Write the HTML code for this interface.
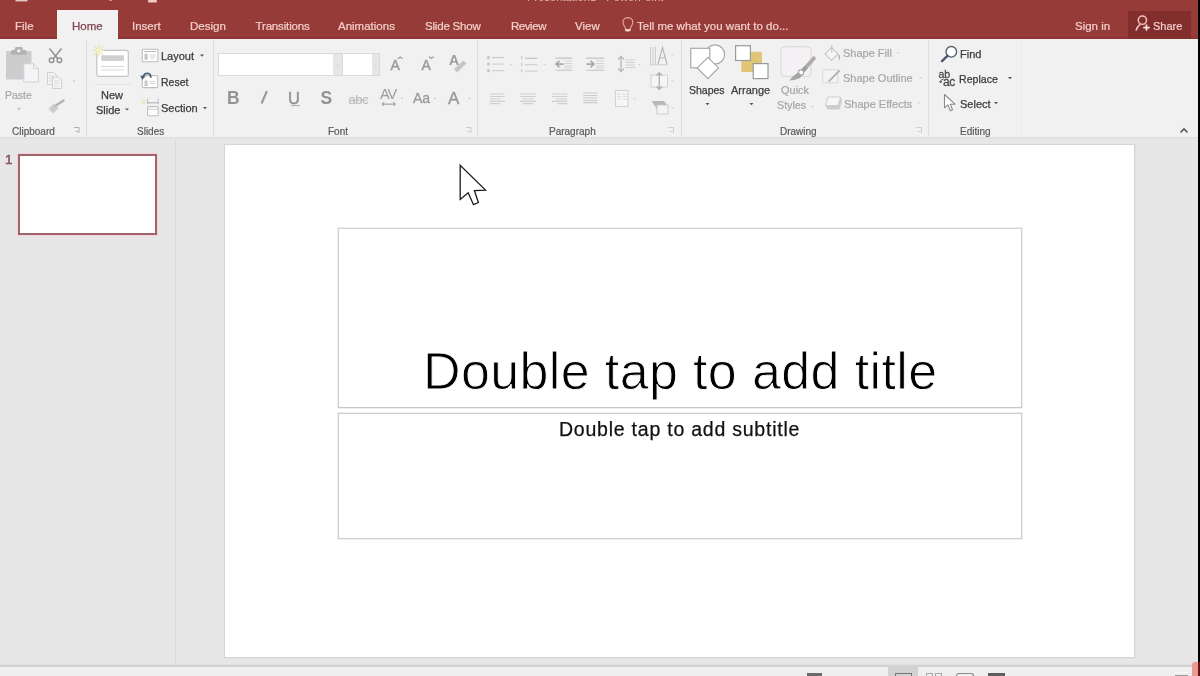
<!DOCTYPE html>
<html><head><meta charset="utf-8">
<style>
*{box-sizing:border-box;margin:0;padding:0}
html,body{width:1200px;height:676px;overflow:hidden;background:#E7E7E7;font-family:"Liberation Sans",sans-serif}
.a{position:absolute;white-space:nowrap}
#bar{position:absolute;left:0;top:0;width:1200px;height:39px;background:#963B38}
.tab{position:absolute;top:18.5px;font-size:11.5px;color:#F4D0CB;line-height:14px;-webkit-text-stroke:0.2px #F4D0CB}
#ribbon{position:absolute;left:0;top:39px;width:1198px;height:98px;background:#F1F1F1}
.lbl{position:absolute;font-size:10px;color:#5A5A5A;line-height:12px;margin-top:1px;-webkit-text-stroke:0.2px #5A5A5A}
.t{position:absolute;font-size:11px;color:#3C3C3C;line-height:13px;margin-top:1px;-webkit-text-stroke:0.25px #3C3C3C}
.t.dis{-webkit-text-stroke:0.2px #A6A6A6}
.dis{color:#A6A6A6}
.sep{position:absolute;top:40px;width:1px;height:97px;background:#DDDDDD}
svg{position:absolute;overflow:visible}
#root{position:absolute;left:0;top:0;width:1200px;height:676px;will-change:transform}
</style></head><body><div id="root">
<div id="bar"></div>
<!-- title bar cut-off text -->
<div class="a" style="left:527px;top:-9px;font-size:11px;color:#E2B5B0;letter-spacing:0.1px;line-height:13px">Presentation1 - PowerPoint</div>
<!-- tabs -->
<div class="a" style="left:0;top:37px;width:1198px;height:2px;background:#8F3335"></div>
<div id="hometab" class="a" style="left:57px;top:10px;width:61px;height:30px;background:#F1F1F1"></div>
<div class="tab" style="left:15px">File</div>
<div class="tab" style="left:72px;color:#7F4450;-webkit-text-stroke:0.25px #7F4450">Home</div>
<div class="tab" style="left:132px">Insert</div>
<div class="tab" style="left:190px">Design</div>
<div class="tab" style="left:255.5px;letter-spacing:-0.15px">Transitions</div>
<div class="tab" style="left:338px">Animations</div>
<div class="tab" style="left:425px;letter-spacing:-0.2px">Slide Show</div>
<div class="tab" style="left:511px;letter-spacing:-0.45px">Review</div>
<div class="tab" style="left:575px">View</div>
<div class="tab" style="left:637px">Tell me what you want to do...</div>
<div class="tab" style="left:1075px">Sign in</div>
<div class="a" style="left:1128px;top:11px;width:63px;height:28px;background:#812E2D"></div>
<div class="tab" style="left:1153px;font-size:11px">Share</div>
<div class="a" style="left:1198px;top:0;width:2px;height:662px;background:#000"></div>


<svg width="1200" height="40" style="left:0;top:0" viewBox="0 0 1200 40">
 <path d="M625.6 27 Q625.6 24.5 624.3 22.8 Q623 21 623 18.9 Q623.2 14.6 627.9 14.4 Q632.6 14.6 632.8 18.9 Q632.8 21 631.5 22.8 Q630.2 24.5 630.2 27 Z" fill="none" stroke="#E8A09A" stroke-width="1.2" transform="translate(0,3.2)"/>
 <rect x="625.2" y="29" width="5" height="2.4" rx="0.8" fill="#F6D2CB"/>
 <circle cx="1142.4" cy="20.2" r="4.1" fill="none" stroke="#F2C4C0" stroke-width="1.5"/>
 <path d="M1140.2 24.3 Q1137 26.5 1136 30.6" fill="none" stroke="#F2C4C0" stroke-width="1.5"/>
 <path d="M1146.5 24.4 V30.8 M1143.3 27.6 H1149.7" stroke="#FBE8E6" stroke-width="1.6"/>
 <rect x="15.5" y="0" width="12" height="1.4" fill="#E9C9C6"/>
 <rect x="148" y="0" width="9" height="2.4" rx="1" fill="#F2C9BF"/>
 <rect x="109" y="0" width="3" height="1" fill="#C98F8A"/>
</svg>

<div id="ribbon"></div>
<div class="a" style="left:0;top:137px;width:1198px;height:2px;background:#E1E1E1"></div>

<!-- group separators -->
<div class="sep" style="left:86px"></div>
<div class="sep" style="left:213px"></div>
<div class="sep" style="left:477px"></div>
<div class="sep" style="left:681px"></div>
<div class="sep" style="left:928px"></div>

<!-- group labels -->
<div class="lbl" style="left:12px;top:125px">Clipboard</div>
<div class="lbl" style="left:137px;top:125px">Slides</div>
<div class="lbl" style="left:328px;top:125px">Font</div>
<div class="lbl" style="left:549px;top:125px">Paragraph</div>
<div class="lbl" style="left:780px;top:125px">Drawing</div>
<div class="lbl" style="left:960px;top:125px">Editing</div>


<!-- ribbon text -->
<div class="t dis" style="left:5px;top:88px;font-size:10.5px">Paste</div>
<div class="a" style="left:94px;top:84px;width:37px;height:1px;background:#E4E4E4"></div>
<div class="t" style="left:101px;top:88px">New</div>
<div class="t" style="left:96px;top:103px">Slide</div>
<div class="t" style="left:161px;top:49px">Layout</div>
<div class="t" style="left:161px;top:75px;font-size:10.5px">Reset</div>
<div class="t" style="left:161px;top:101px">Section</div>
<div class="t" style="left:689px;top:83px;font-size:10.5px">Shapes</div>
<div class="t" style="left:731px;top:83px">Arrange</div>
<div class="t dis" style="left:781px;top:83px">Quick</div>
<div class="t dis" style="left:777px;top:98px;font-size:10.7px">Styles</div>
<div class="t dis" style="left:843px;top:46px">Shape Fill</div>
<div class="t dis" style="left:843px;top:71px">Shape Outline</div>
<div class="t dis" style="left:844px;top:97px">Shape Effects</div>
<div class="t" style="left:960px;top:47px">Find</div>
<div class="t" style="left:959px;top:72px;font-size:10.6px">Replace</div>
<div class="t" style="left:960px;top:97px">Select</div>
<!-- font boxes -->
<div class="a" style="left:218px;top:53px;width:125px;height:23px;background:#fff;border:1px solid #DADADA"></div>
<div class="a" style="left:333px;top:54px;width:9px;height:21px;background:#E6E6E6"></div>
<div class="a" style="left:342px;top:53px;width:38px;height:23px;background:#fff;border:1px solid #DADADA"></div>
<div class="a" style="left:372px;top:54px;width:7px;height:21px;background:#E6E6E6"></div>
<!-- B I U S -->
<div class="a" style="left:227px;top:88px;font-size:17.5px;font-weight:bold;color:#939393;line-height:20px">B</div>

<div class="a" style="left:288px;top:87.5px;font-size:16.5px;color:#939393;line-height:20px;-webkit-text-stroke:0.5px #939393">U</div>
<div class="a" style="left:320.5px;top:88px;font-size:17.5px;font-weight:bold;color:#939393;line-height:20px">S</div>
<div class="a" style="left:348.5px;top:91.5px;font-size:13px;color:#B8B8B8;line-height:16px;letter-spacing:-0.5px">abc</div>
<div class="a" style="left:380px;top:86px;font-size:14.5px;color:#9C9C9C;line-height:16px;letter-spacing:-1.2px">AV</div>
<div class="a" style="left:413px;top:90px;font-size:14px;color:#9A9A9A;line-height:16px;-webkit-text-stroke:0.3px #9A9A9A">Aa</div>
<div class="a" style="left:448px;top:88.5px;font-size:17px;color:#9A9A9A;line-height:20px;-webkit-text-stroke:0.4px #9A9A9A">A</div>
<div class="a" style="left:390.5px;top:57px;font-size:14px;color:#9A9A9A;line-height:16px;-webkit-text-stroke:0.4px #9A9A9A">A</div>
<div class="a" style="left:421.5px;top:57px;font-size:14px;color:#9A9A9A;line-height:16px;-webkit-text-stroke:0.4px #9A9A9A">A</div>
<div class="a" style="left:449px;top:52px;font-size:14px;color:#9C9C9C;line-height:16px;font-weight:bold">A</div>
<!-- editing ab/ac -->
<div class="a" style="left:938.5px;top:68.5px;font-size:10.5px;color:#4A4A4A;line-height:11px;-webkit-text-stroke:0.3px #4A4A4A">ab</div>
<div class="a" style="left:943px;top:75.5px;font-size:12px;color:#4A4A4A;line-height:13px;-webkit-text-stroke:0.3px #4A4A4A;letter-spacing:-0.3px">ac</div>
<div class="sep" style="left:1021px;background:#ECECEC"></div>


<!-- icons overlay -->
<svg width="1200" height="676" style="left:0;top:0" viewBox="0 0 1200 676">
<g id="clip">
 <rect x="6" y="51" width="25.5" height="28.5" fill="#CDCDCD"/>
 <path d="M11 54.8 V51.5 Q11 50 12.5 50 H14.8 V48.5 Q14.8 47 16.3 47 H21.3 Q22.8 47 22.8 48.5 V50 H25.1 Q26.6 50 26.6 51.5 V54.8 Z" fill="#B2B2B2"/>
 <circle cx="18.8" cy="50.8" r="1.6" fill="#F4F4F4"/>
 <path d="M23.8 63.8 H33.5 L38.4 68.7 V82 H23.8 Z" fill="#F6F4F8" stroke="#D2D2D2" stroke-width="1"/>
 <path d="M33.5 63.8 V68.7 H38.4" fill="none" stroke="#D2D2D2" stroke-width="1"/>
 <path d="M17 108 h4 l-2 2 z" fill="#B8B8B8"/>
 <!-- scissors -->
 <path d="M49.5 48.5 L57.5 58.5 M61.5 48.5 L53.5 58.5" stroke="#8C8C8C" stroke-width="1.3" fill="none"/>
 <circle cx="51.6" cy="60.2" r="2.3" fill="none" stroke="#8C8C8C" stroke-width="1.3"/>
 <circle cx="59.4" cy="60.2" r="2.3" fill="none" stroke="#8C8C8C" stroke-width="1.3"/>
 <!-- copy -->
 <path d="M47.5 72.5 h6 l3 3 v9 h-9 z" fill="#F4F4F4" stroke="#CFCFCF" stroke-width="1"/>
 <path d="M52.5 77 h6 l3 3 v8.5 h-9 z" fill="#F4F4F4" stroke="#CFCFCF" stroke-width="1"/>
 <path d="M49 76h5M49 78.5h5M49 81h3M54 81h5M54 83.5h5M54 86h5" stroke="#D6D6D6" stroke-width="0.8"/>
 <path d="M72.5 80.5 h3 l-1.5 1.5 z" fill="#C4C4C4"/>
 <!-- format painter -->
 <path d="M48.5 109 L54 103.5 L58.5 108 L53 113.5 Z" fill="#CFCFCF"/>
 <path d="M50.5 107 L55 111.5 M52.5 105 L57 109.5" stroke="#BEBEBE" stroke-width="0.8"/>
 <path d="M56 105.5 L63.5 100.5" stroke="#B4B4B4" stroke-width="2.6" stroke-linecap="round"/>
</g>
<g id="slides">
 <rect x="96.8" y="50.3" width="31.5" height="26" rx="1.8" fill="#fff" stroke="#C4C4C4" stroke-width="1.2"/>
 <rect x="101.2" y="55.3" width="22.8" height="5.6" fill="#D0D0D0"/>
 <path d="M101.2 66.4 H124 M101.2 70 H124" stroke="#D6D6D6" stroke-width="1"/>
 <g stroke="#E3E2A8" stroke-width="1.2">
  <path d="M98.9 44.5 V56.5 M92.9 50.5 H104.9 M94.7 46.3 L103.1 54.7 M103.1 46.3 L94.7 54.7"/>
 </g>
 <circle cx="98.9" cy="50.5" r="2.6" fill="#F2F2C8"/>
 <path d="M125 108.4 h4 l-2 2.2 z" fill="#555"/>
 <!-- layout -->
 <rect x="142.3" y="49.2" width="15.6" height="12.6" rx="1" fill="#fff" stroke="#BDBDBD" stroke-width="1.1"/>
 <path d="M144.3 51.6 H156" stroke="#B5B5B5" stroke-width="1"/>
 <rect x="144.5" y="53.8" width="3.2" height="6" fill="#C6C6C6"/>
 <path d="M149.5 55 H155.5 M149.5 57 H155.5 M151 59 H154" stroke="#CACACA" stroke-width="0.8"/>
 <path d="M200 54.5 h4 l-2 2.2 z" fill="#555"/>
 <!-- reset -->
 <rect x="142.3" y="75.6" width="15.4" height="12" rx="1" fill="#fff" stroke="#C0C0C0" stroke-width="1.1"/>
 <rect x="144.5" y="80.5" width="3.2" height="5.5" fill="#CACACA"/>
 <path d="M149.5 81.5 H155.5 M149.5 83.5 H155.5" stroke="#CACACA" stroke-width="0.8"/>
 <path d="M142.8 77.6 Q144 73.2 147.5 73.4 Q151 73.8 150.8 77.8" fill="none" stroke="#4A6076" stroke-width="1.7"/>
 <path d="M140.2 75.6 L142.2 79.8 L145.6 76.6 Z" fill="#4A6076"/>
 <!-- section -->
 <path d="M147.6 98.6 V104.2 M158.2 98.6 V104.2" stroke="#C4C4C4" stroke-width="1.1"/>
 <path d="M147 102.8 H158.8" stroke="#B8B8B8" stroke-width="1.2"/>
 <rect x="147.6" y="106.6" width="10.6" height="9.2" rx="0.8" fill="#fff" stroke="#BFBFBF" stroke-width="1.1"/>
 <path d="M147.6 109.2 H158.2" stroke="#C4C4C4" stroke-width="0.9"/>
 <rect x="141.5" y="99.5" width="4" height="4.5" fill="#EAEACB"/>
 <path d="M203 107 h4 l-2 2.2 z" fill="#555"/>
</g>
<g id="font">
 <path d="M291 105.6 H300" stroke="#AAAAAA" stroke-width="1"/>
 <path d="M261.6 103.5 L266.9 91" stroke="#979797" stroke-width="2"/>
 <path d="M348.5 100.2 H367" stroke="#BDBDBD" stroke-width="1"/>
 <path d="M382 104.1 H395.5 M382 104.1 l2.2 -1.8 M382 104.1 l2.2 1.8 M395.5 104.1 l-2.2 -1.8 M395.5 104.1 l-2.2 1.8" stroke="#A8A8A8" stroke-width="1.2" fill="none"/>
 <circle cx="401.9" cy="98.3" r="0.8" fill="#BBB"/>
 <circle cx="435" cy="98.5" r="0.8" fill="#BBB"/>
 <circle cx="469.4" cy="98.5" r="0.8" fill="#BBB"/>
 <path d="M397.8 58.7 L400.2 56.9 L402.6 58.7" stroke="#A0A0A0" stroke-width="1.2" fill="none"/>
 <path d="M429 56.6 L431.4 58.4 L433.8 56.6" stroke="#A0A0A0" stroke-width="1.2" fill="none"/>
 <path d="M454 69 L463.5 60.5 L466.5 63.5 L457 72.5 Z" fill="#C6C6C6"/>
 <path d="M336.5 64.5 h2 l-1 1 z M374.5 64.5 h2 l-1 1 z" fill="#C8C8C8"/>
 <path d="M466 127.5 h5 v5.5 M467.5 131.5 h2.5" stroke="#C8C8C8" stroke-width="0.9" fill="none"/>
 <path d="M74 127.5 h5 v5.5 M75.5 131.5 h2.5" stroke="#A8A8A8" stroke-width="0.9" fill="none"/>
</g>
<g id="para" stroke-width="1.1" fill="none">
 <g stroke="#C6C6C6">
  <circle cx="488.5" cy="57.6" r="1" fill="#C0C0C0"/><circle cx="488.5" cy="64.1" r="1" fill="#C6C6C6"/><circle cx="488.5" cy="70.6" r="1" fill="#C6C6C6"/>
  <path d="M491.9 57.6 H503.8"/>
 </g>
 <path d="M491.9 64.1 H503.8 M491.9 70.6 H503.8" stroke="#D2D2D2"/>
 <path d="M521.7 56 V59.5 M521.7 62.5 V66 M521.7 69 V72.5" stroke="#C8C8C8"/>
 <path d="M525 58.3 H537.4" stroke="#BEBEBE"/>
 <path d="M525 64.6 H537.4 M525 71.1 H537.4" stroke="#D2D2D2"/>
 <path d="M509.5 64 h3 l-1.5 1.5 z M543 64 h3 l-1.5 1.5 z" fill="#CFCFCF" stroke="none"/>
 <!-- indent -->
 <path d="M555.5 58.1 H572.1 M555.5 70.2 H572.1" stroke="#C4C4C4"/>
 <path d="M564.5 61 H572 M564.5 63.5 H572 M564.5 66 H572 M564.5 68 H572" stroke="#D4D4D4"/>
 <path d="M556 64.1 H563.5 M559.5 60.8 L556 64.1 L559.5 67.4" stroke="#A8A8A8" stroke-width="1.6"/>
 <path d="M586.2 58.1 H604 M586.2 70.2 H604" stroke="#C4C4C4"/>
 <path d="M596 61 H604 M596 63.5 H604 M596 66 H604 M596 68 H604" stroke="#D4D4D4"/>
 <path d="M586.5 64.1 H594 M590.5 60.8 L594 64.1 L590.5 67.4" stroke="#A8A8A8" stroke-width="1.6"/>
 <!-- align -->
 <path d="M490 94 H504.7 M490 96.5 H504.7 M490 99 H501 M490 101.4 H504.7 M490 103.6 H500" stroke="#CFCFCF"/>
 <path d="M520 94 H536 M520 96.5 H536 M522 99 H534 M520 101.4 H536 M523 103.6 H533" stroke="#CFCFCF"/>
 <path d="M552 94 H567.3 M552 96.5 H567.3 M556 99 H567.3 M552 101.4 H567.3 M557 103.6 H567.3" stroke="#CFCFCF"/>
 <path d="M583.3 93 H597.3 M583.3 95.5 H597.3 M583.3 98 H597.3 M583.3 100.5 H597.3 M583.3 102.6 H597.3" stroke="#CBCBCB"/>
 <rect x="615.5" y="90.5" width="12.5" height="16" fill="#F6F6F6" stroke="#D2D2D2"/>
 <path d="M617 94 H621 M617 96.5 H621 M617 99 H621 M622.5 94 H626.5 M622.5 96.5 H626.5 M622.5 99 H626.5" stroke="#D6D6D6" stroke-width="0.8"/>
 <path d="M633 98.3 h3 l-1.5 1.5 z" fill="#CFCFCF" stroke="none"/>
 <!-- line spacing -->
 <path d="M621 57 V71 M618 59.5 L621 56.5 L624 59.5 M618 68.5 L621 71.5 L624 68.5" stroke="#B8B8B8" stroke-width="1.3"/>
 <path d="M625.5 60 H635 M625.5 62.5 H635 M625.5 65 H635 M625.5 67.5 H635" stroke="#D0D0D0"/>
 <path d="M638 64 h3 l-1.5 1.5 z" fill="#CFCFCF" stroke="none"/>
 <!-- text direction -->
 <path d="M650.5 47 V64.5 M653 47 V64.5 M655.5 47 V64.5 M649.5 64.8 H668" stroke="#C8C8C8" stroke-width="0.9"/>
 <path d="M658 64 L662.5 47.5 L667 64 M659.5 58 H665.5" stroke="#B8B8B8" stroke-width="1.2"/>
 <path d="M671 54 h3 l-1.5 1.5 z" fill="#CFCFCF" stroke="none"/>
 <!-- align text -->
 <rect x="651" y="75" width="16.5" height="12" fill="#F6F6F6" stroke="#CFCFCF" stroke-width="0.9"/>
 <path d="M659.3 72.5 V89.5 M656.5 75.5 L659.3 72.7 L662 75.5 M656.5 86.5 L659.3 89.3 L662 86.5" stroke="#B0B0B0" stroke-width="1.3"/>
 <path d="M671 80.5 h3 l-1.5 1.5 z" fill="#CFCFCF" stroke="none"/>
 <!-- smartart -->
 <path d="M651.5 101 H664 L667 105 L664 109 H657 Z" fill="#B8B8B8" stroke="none"/>
 <rect x="657" y="105" width="11" height="9" fill="#F4F4F4" stroke="#C8C8C8" stroke-width="0.9"/>
 <path d="M671 107 h3 l-1.5 1.5 z" fill="#CFCFCF" stroke="none"/>
 <path d="M668.5 127.5 h5 v5.5 M670 131.5 h2.5" stroke="#C8C8C8" stroke-width="0.9"/>
</g>
<g id="drawing">
 <circle cx="715" cy="54.5" r="9.6" fill="#fff" stroke="#A8A8A8" stroke-width="1.2"/>
 <rect x="690.8" y="48.3" width="19" height="19.5" fill="#fff" stroke="#A8A8A8" stroke-width="1.2"/>
 <path d="M707.9 57.3 L718.4 67.9 L707.9 78.6 L697.3 67.9 Z" fill="#fff" stroke="#A8A8A8" stroke-width="1.2"/>
 <path d="M705.5 103 h4 l-2 2.2 z M749.5 103 h4 l-2 2.2 z" fill="#555"/>
 <rect x="741.3" y="51.8" width="20.6" height="20.2" fill="#E0C676"/>
 <rect x="735.6" y="45.7" width="14.8" height="14.8" fill="#fff" stroke="#9A9A9A" stroke-width="1.2"/>
 <rect x="753.2" y="63.6" width="14.8" height="15" fill="#fff" stroke="#9A9A9A" stroke-width="1.2"/>
 <!-- quick styles -->
 <rect x="781" y="46.8" width="30" height="29.6" rx="3.5" fill="#F4F0F4" stroke="#D6D6D6" stroke-width="1"/>
 <path d="M813.8 55.8 L816.2 58.6 L807 69 L804 66.5 Z" fill="#ABABAB"/>
 <path d="M804.5 65.8 L807.6 68.6 L804.6 72 L801.5 69.2 Z" fill="#9C9C9C"/>
 <circle cx="801" cy="72.6" r="2.7" fill="#fff" stroke="#A4A4A4" stroke-width="1.1"/>
 <path d="M798.3 72.3 L802.2 75.6 Q799.5 80.3 789.2 80.6 Q792.5 76 798.3 72.3 Z" fill="#A6A6A6"/>
 <path d="M811 106 h3 l-1.5 1.5 z" fill="#C8C8C8"/>
 <!-- shape fill -->
 <path d="M831.5 47.5 L838 54 L831.5 60.5 L825 54 Z" fill="#F6F6F6" stroke="#C8C8C8" stroke-width="1.1"/>
 <path d="M831.8 45 V53" stroke="#C0C0C0" stroke-width="1"/>
 <path d="M838.5 55 Q840 57 839.3 59.5" stroke="#B0B0B0" stroke-width="1.3" fill="none"/>
 <path d="M896.5 52.2 h3 l-1.5 1.5 z" fill="#C8C8C8"/>
 <!-- shape outline -->
 <rect x="822.8" y="69.8" width="15" height="13" fill="#F4F4F4" stroke="#D8D8D8" stroke-width="1"/>
 <path d="M839.6 70.4 L828.6 81.6" stroke="#B0B0B0" stroke-width="1.8"/>
 <path d="M919.2 77 h3 l-1.5 1.5 z" fill="#C8C8C8"/>
 <!-- shape effects -->
 <path d="M828 97 L840.5 97 L842 101 L839.5 109.5 L827.5 109.5 L825.5 105.5 Z" fill="#CDCDCD"/>
 <path d="M828 97 L840.5 97 L838 105.5 L825.5 105.5 Z" fill="#F6F6F6" stroke="#C8C8C8" stroke-width="0.8"/>
 <path d="M917 102.5 h3 l-1.5 1.5 z" fill="#C8C8C8"/>
 <path d="M916.5 127.5 h5 v5.5 M918 131.5 h2.5" stroke="#C8C8C8" stroke-width="0.9" fill="none"/>
</g>
<g id="editing">
 <circle cx="951.3" cy="51.8" r="5.3" fill="#fff" stroke="#59606E" stroke-width="1.4"/>
 <path d="M947.4 55.9 L942 61.2" stroke="#4B5670" stroke-width="2.4" stroke-linecap="round"/>
 <path d="M1008 77 h4 l-2 2.2 z M994 102 h4 l-2 2.2 z" fill="#555"/>
 <path d="M943.5 79.2 Q940.5 79.5 940.5 81.5 M939.4 81 L940.6 83 L942 81" stroke="#555" stroke-width="1" fill="none"/>
 <path d="M944.5 94.5 V107.8 L947.8 104.8 L950.3 110.7 L952.5 109.8 L950.2 104.2 L955 104.2 Z" fill="#fff" stroke="#8A8A8A" stroke-width="1.1" stroke-linejoin="round"/>
</g>
<!-- collapse caret -->
<path d="M1180.5 132.5 L1184 129 L1187.5 132.5" stroke="#555" stroke-width="1.6" fill="none"/>
</svg>

<!-- slide pane -->
<div class="a" style="left:175px;top:139px;width:1px;height:527px;background:#D9D9D9"></div>
<div class="a" style="left:5px;top:152px;font-size:13.5px;color:#8A525C;-webkit-text-stroke:0.5px #8A525C;line-height:15px">1</div>
<div class="a" style="left:18px;top:154px;width:139px;height:81px;border:2px solid #A3646C;background:#fff;box-shadow:0 0 1px 1px #F0D6D8"></div>

<!-- slide -->
<div class="a" style="left:224px;top:144px;width:911px;height:514px;background:#fff;border:1px solid #D6D6D6;box-shadow:0 0 0.5px 0.5px #E0E0E0"></div>
<div class="a" style="left:338px;top:227.5px;width:683.5px;height:180px;border:1px solid #CECECE;border-color:#D4D4D4 #CDCDCD #C6C6C6 #CDCDCD;box-shadow:0 0 0 0.6px #E4E4E4"></div>
<div class="a" style="left:338px;top:413px;width:683.5px;height:125.5px;border:1px solid #CDCDCD;box-shadow:0 0 0 0.6px #E4E4E4"></div>
<div class="a" style="left:423px;top:341px;font-size:52px;letter-spacing:0.37px;color:#000;line-height:60px;-webkit-text-stroke:0.9px #fff">Double tap to add title</div>
<div class="a" style="left:559px;top:417.5px;font-size:19.5px;letter-spacing:0.77px;color:#111;line-height:22px;-webkit-text-stroke:0.25px #111">Double tap to add subtitle</div>

<!-- status bar -->
<div class="a" style="left:0;top:664px;width:1198px;height:1px;background:#E0E0E0"></div>
<div class="a" style="left:0;top:665px;width:1198px;height:2px;background:#D3D3D3"></div>
<div class="a" style="left:0;top:667px;width:1198px;height:9px;background:#EFEFEF"></div>
<div class="a" style="left:888px;top:667px;width:30px;height:9px;background:#D2D2D2"></div>
<div class="a" style="left:807px;top:673px;width:15px;height:3px;background:#6A6A6A"></div>
<div class="a" style="left:895px;top:673px;width:17px;height:3px;border:1px solid #777;border-bottom:none"></div>
<div class="a" style="left:926px;top:673px;width:7px;height:3px;border:1px solid #A8A8A8;border-bottom:none"></div>
<div class="a" style="left:935px;top:673px;width:7px;height:3px;border:1px solid #A8A8A8;border-bottom:none"></div>
<div class="a" style="left:956px;top:673px;width:18px;height:3px;border:1px solid #8A8A8A;border-bottom:none;border-radius:3px 3px 0 0"></div>
<div class="a" style="left:988px;top:673px;width:17px;height:3px;background:#5E5E5E"></div>
<div class="a" style="left:1175px;top:672px;width:13px;height:1px;background:#FAFAFA"></div>
<div class="a" style="left:1175px;top:675px;width:13px;height:1px;background:#9A9A9A"></div>
<div class="a" style="left:1192px;top:662px;width:6px;height:14px;background:#EE9A94;border-radius:3px 0 0 0"></div>
<div class="a" style="left:1198px;top:662px;width:2px;height:14px;background:#6B1510"></div>
<!-- cursor -->
<svg width="30" height="45" style="left:0;top:0">
<path d="M460.2 165.2 L460.2 199.4 L468.2 192.7 L473.5 204.7 L478.4 202.5 L474.4 190.5 L485.5 190.1 Z" fill="#fff" stroke="#1a1a1a" stroke-width="1.3" stroke-linejoin="miter"/>
</svg>
</div></body></html>
